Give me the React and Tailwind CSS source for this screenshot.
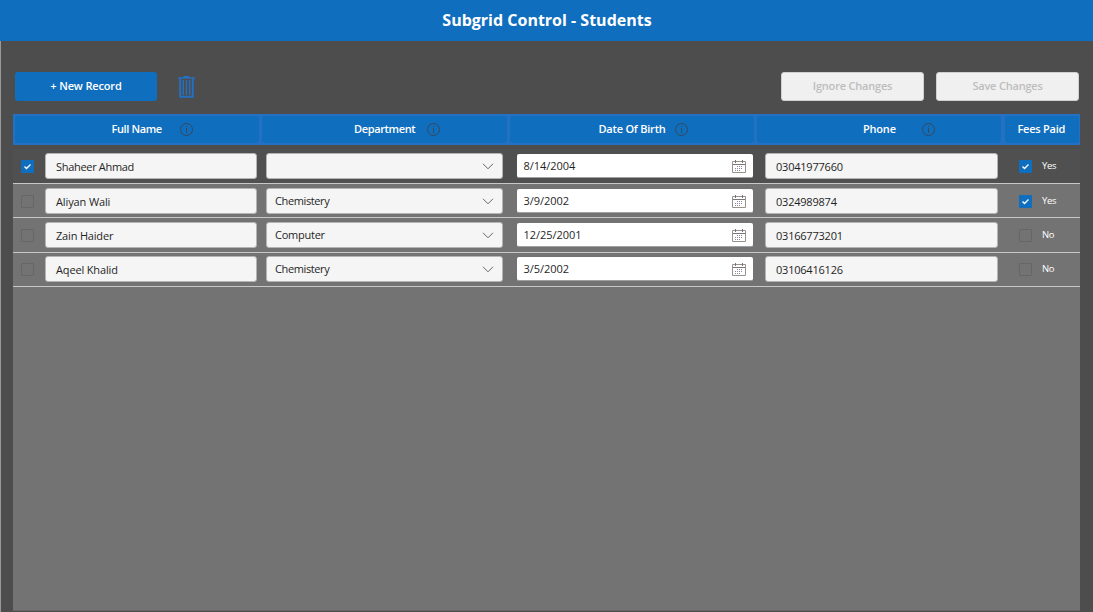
const columns = [
  { label: "Full Name", cell: "w-[244px]", text: "ml-[96.5px] w-[51px] tracking-[-0.38px]", info: "ml-[17px]" },
  { label: "Department", cell: "ml-[3px] w-[245px]", text: "ml-[92px] w-[61px] tracking-[-0.36px]", info: "ml-[12px]" },
  { label: "Date Of Birth", cell: "ml-[3px] w-[244px]", text: "ml-[88.5px] w-[67px] tracking-[-0.22px]", info: "ml-[9.5px]" },
  { label: "Phone", cell: "ml-[3px] w-[244px]", text: "ml-[106px] w-[33px] tracking-[-0.2px]", info: "ml-[26px]" },
  { label: "Fees Paid", cell: "ml-[4px] w-[74px]", text: "ml-[12.5px] w-[48px] tracking-[-0.25px]", info: null },
];

const rows = [
  { name: "Shaheer Ahmad", nt: "tracking-[-0.31px]", dept: "", dt: "", dob: "8/14/2004", phone: "03041977660", paid: true, selected: true, style: "h-[35px] bg-[#505050]", pad: "pt-[4px]" },
  { name: "Aliyan Wali", nt: "tracking-[-0.12px]", dept: "Chemistery", dt: "tracking-[-0.38px]", dob: "3/9/2002", phone: "0324989874", paid: true, selected: false, style: "h-[34px]", pad: "pt-[4px]" },
  { name: "Zain Haider", nt: "tracking-[-0.18px]", dept: "Computer", dt: "tracking-[-0.25px]", dob: "12/25/2001", phone: "03166773201", paid: false, selected: false, style: "h-[35px]", pad: "pt-[4px]" },
  { name: "Aqeel Khalid", nt: "tracking-[-0.15px]", dept: "Chemistery", dt: "tracking-[-0.38px]", dob: "3/5/2002", phone: "03106416126", paid: false, selected: false, style: "h-[34px]", pad: "pt-[3px]" },
];

function Info() {
  return (
    <svg className="block size-[13px]" viewBox="0 0 13 13" fill="none" stroke="#35485c">
      <circle cx="6.5" cy="6.5" r="6" />
      <path d="M6.5 5v5M6.5 3v1" />
    </svg>
  );
}

function Trash() {
  return (
    <svg className="block h-[22px] w-[17px]" viewBox="0 0 17 22" fill="none" stroke="#2470c3">
      <path d="M0 2h17M6.5 2V.5h4V2" strokeWidth="1.6" />
      <path d="M2.2 2.5v18.3h12.6V2.5" strokeWidth="2" />
      <path d="M5.3 4v15M8.5 4v15M11.7 4v15" strokeWidth="1.4" />
    </svg>
  );
}

function Calendar() {
  return (
    <svg className="block h-[13px] w-[14px]" viewBox="0 0 14 13" fill="none">
      <path d="M.5 1.5h13v11H.5z" stroke="#99928c" />
      <path d="M1 4.5h12M3.5 0v3M10.5 0v3" stroke="#77747c" />
      <path d="M5 6.5h6M3 8.5h8M3 10.5h6" strokeDasharray="1 1" stroke="#8888a0" />
    </svg>
  );
}

function Check({ checked }) {
  return (
    <span className={"flex size-[13px] items-center justify-center rounded-[1px] " + (checked ? "bg-[#106ebe]" : "border border-[#666]")}>
      {checked && (
        <svg className="size-[13px]" viewBox="0 0 13 13" fill="none" stroke="#fff" strokeWidth="1.3">
          <path d="M3.5 6.5l2 2 4-4" />
        </svg>
      )}
    </span>
  );
}

function Row({ row }) {
  const field = "flex h-[26px] shrink-0 rounded-[3px] border border-[#b4b4b4] bg-[#f5f5f5]";
  return (
    <div className={"flex items-start border-b border-[#c8c8c8] text-[11px] leading-4 text-[#1f1f1f] " + row.style + " " + row.pad}>
      <div className="ml-[8px] mt-[7px]"><Check checked={row.selected} /></div>
      <div className={field + " ml-[11px] w-[212px] pl-[10px] pt-[5px] " + row.nt}>{row.name}</div>
      <div className={field + " ml-[9px] w-[237px] justify-between px-[8px] pt-[4px]"}>
        <span className={row.dt}>{row.dept}</span>
        <svg className="mt-[5px] h-[7px] w-[12px]" viewBox="0 0 12 7" fill="none" stroke="#666">
          <path d="M1 .8l5 5 5-5" />
        </svg>
      </div>
      <div className="ml-[13.5px] mt-[1px] flex h-[24px] w-[236.5px] shrink-0 justify-between rounded-[2px] border-b border-[#a0a0a0] bg-white px-[7px] pt-[4px]">
        <span className="tracking-[-0.05px]">{row.dob}</span>
        <div className="mt-[2px]"><Calendar /></div>
      </div>
      <div className={field + " ml-[12px] w-[233px] pl-[10px] pt-[5px] tracking-[-0.22px]"}>{row.phone}</div>
      <div className="ml-[21px] mt-[7px]"><Check checked={row.paid} /></div>
      <span className="ml-[10px] mt-[5px] text-[9.5px] font-medium tracking-[-0.3px] text-white">{row.paid ? "Yes" : "No"}</span>
    </div>
  );
}

export default function App() {
  return (
    <div className={'flex h-[612px] w-[1093px] flex-col overflow-hidden whitespace-nowrap bg-[#4d4d4d] font-["Open_Sans","Noto_Sans",sans-serif]'}>
      <header className="flex h-[41px] shrink-0 justify-center bg-[#106ebe] pl-[1px] pt-[12px] text-[16px] font-bold leading-4 text-white">
        <h1>Subgrid Control - Students</h1>
      </header>
      <main className="flex flex-1 flex-col border-l border-[#999] pl-[12px] pr-[13px]">
        <div className="flex h-[73px] shrink-0 pl-[2px] pr-[1px] pt-[31px] text-[11px] font-semibold leading-4">
          <button className="flex h-[29px] w-[142px] justify-center rounded-[3px] bg-[#106ebe] pt-[6px] tracking-[-0.15px] text-white">+ New Record</button>
          <div className="ml-[21px] mt-[4px]"><Trash /></div>
          <div className="ml-auto flex gap-[12px] tracking-[-0.2px] text-[#bdbdbd]">
            <button className="flex h-[29px] w-[143px] justify-center rounded-[3px] border border-[#d0d0d0] bg-[#f0f0f0] pt-[5px]">Ignore Changes</button>
            <button className="flex h-[29px] w-[143px] justify-center rounded-[3px] border border-[#d0d0d0] bg-[#f0f0f0] pt-[5px]">Save Changes</button>
          </div>
        </div>
        <div className="flex h-[31px] shrink-0 bg-[#2470c3] py-[2px] pl-[2px] text-[11px] font-semibold leading-4 text-white">
          {columns.map((c) => (
            <div key={c.label} className={"flex shrink-0 rounded-[3px] bg-[#106ebe] pt-[5px] " + c.cell}>
              <span className={"shrink-0 " + c.text}>{c.label}</span>
              {c.info && <div className={"mt-[2px] " + c.info}><Info /></div>}
            </div>
          ))}
        </div>
        <div className="mt-[4px] h-[462px] border-b border-[#666] bg-[#737373]">
          {rows.map((r) => <Row key={r.name} row={r} />)}
        </div>
        <div className="h-[1px] shrink-0" />
      </main>
    </div>
  );
}
